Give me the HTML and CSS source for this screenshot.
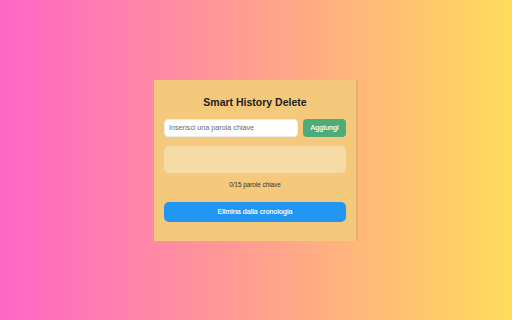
FILE: index.html
```html
<!DOCTYPE html>
<html lang="it">
<head>
<meta charset="utf-8">
<title>Smart History Delete</title>
<link rel="stylesheet" href="styles.css">
</head>
<body>
<div class="card">
  <h1 class="title">Smart History Delete</h1>
  <div class="row">
    <input class="keyword" type="text" placeholder="Inserisci una parola chiave">
    <button class="add">Aggiungi</button>
  </div>
  <div class="list"></div>
  <div class="counter">0/15 parole chiave</div>
  <button class="delete">Elimina dalla cronologia</button>
</div>
</body>
</html>
```
FILE: styles.css
```css
html, body {
  margin: 0;
  height: 100%;
}
body {
  background: linear-gradient(90deg, #ff66c8 0%, #ffa58a 55%, #ffdc5c 100%);
  display: flex;
  align-items: center;
  justify-content: center;
  font-family: "Liberation Sans", Arial, sans-serif;
}
.card {
  box-sizing: border-box;
  width: 204px;
  height: 161px;
  padding: 16px 12px 0 10px;
  background: #f4c97b;
  box-shadow: inset -2px 0 0 #e6b26e;
  display: flex;
  flex-direction: column;
}
.title {
  margin: 0;
  font-size: 10.5px;
  line-height: 13px;
  font-weight: bold;
  text-align: center;
  color: #222;
}
.row {
  display: flex;
  gap: 5px;
  margin-top: 10px;
  height: 18px;
}
.keyword {
  flex: 1;
  min-width: 0;
  box-sizing: border-box;
  height: 18px;
  margin: 0;
  padding: 0 4px;
  border: 1px solid #ececec;
  border-radius: 4px;
  background: #fff;
  font-family: inherit;
  font-size: 7.2px;
  color: #333;
  outline: none;
}
.keyword::placeholder {
  color: #6a6a6a;
}
.add {
  box-sizing: border-box;
  width: 43px;
  height: 18px;
  margin: 0;
  padding: 0;
  border: none;
  border-radius: 4px;
  background: #4dab7c;
  color: #fff;
  font-family: inherit;
  font-size: 7.2px;
  font-weight: normal;
  -webkit-text-stroke: 0.15px #fff;
}
.list {
  margin-top: 9px;
  height: 27px;
  border-radius: 5px;
  background: #f5dba4;
}
.counter {
  margin-top: 8px;
  font-size: 6.3px;
  line-height: 8px;
  text-align: center;
  color: #333;
}
.delete {
  box-sizing: border-box;
  margin: 13px 0 0;
  height: 20px;
  width: 100%;
  padding: 0;
  border: none;
  border-radius: 5px;
  background: #2196f3;
  color: #fff;
  font-family: inherit;
  font-size: 7.1px;
  font-weight: normal;
  -webkit-text-stroke: 0.15px #fff;
}
```
